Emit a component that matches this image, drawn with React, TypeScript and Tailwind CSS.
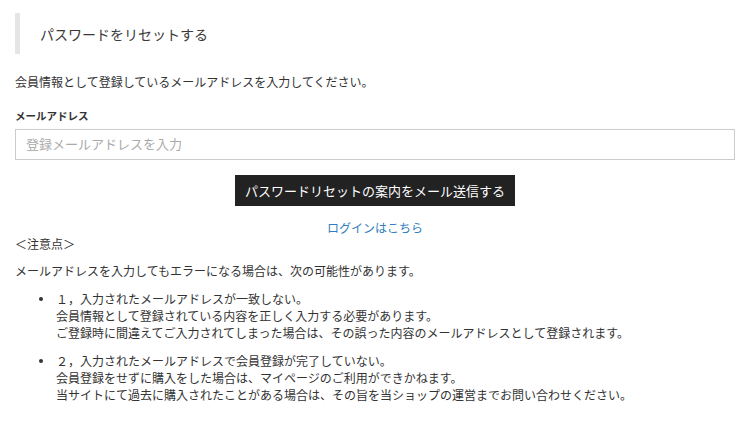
import React from "react";

export default function App() {
  const font = {
    fontFamily: '"Noto Sans CJK JP", "Noto Sans", sans-serif',
  };
  return (
    <div
      className="w-[748px] h-[426px] bg-white text-[#333] pt-[13px] px-[15px] font-['Noto_Sans_CJK_JP',sans-serif]"
      style={font}
    >
      <div className="w-[720px]">
        <h2 className="border-l-[5px] border-[#e5e5e5] h-[41px] flex items-center pl-[20px] text-[14px] font-normal text-[#3a3a3a] leading-none">
          パスワードをリセットする
        </h2>
        <p className="mt-[19px] text-[12px] leading-[18px]">
          会員情報として登録しているメールアドレスを入力してください。
        </p>
        <div className="mt-[17px] text-[10.5px] font-bold leading-[16px]">
          メールアドレス
        </div>
        <input
          type="text"
          placeholder="登録メールアドレスを入力"
          className="mt-[5px] block w-[720px] h-[31px] border border-[#cccccc] pl-[10px] pr-[10px] pb-[3px] text-[13px] placeholder:text-[#aaaaaa] outline-none"
        />
        <div className="mt-[15px] flex justify-center">
          <button className="h-[31px] px-[10px] bg-[#222222] text-white text-[13px] leading-none">
            パスワードリセットの案内をメール送信する
          </button>
        </div>
        <div className="mt-[14px] text-center text-[12px] leading-[16px]">
          <a className="text-[#2f7ec0]" href="#">
            ログインはこちら
          </a>
        </div>
        <div className="text-[12px] leading-[16px]">＜注意点＞</div>
        <p className="mt-[10px] text-[12px] leading-[18px]">
          メールアドレスを入力してもエラーになる場合は、次の可能性があります。
        </p>
        <ul className="mt-[10px] pl-[24px] text-[12px] leading-[17px] flex flex-col gap-[11px]">
          <li className="flex">
            <span className="w-[17px] shrink-0 pt-[7px]">
              <span className="block w-[4px] h-[4px] rounded-full bg-[#333]" />
            </span>
            <div>
              <div>１，入力されたメールアドレスが一致しない。</div>
              <div>会員情報として登録されている内容を正しく入力する必要があります。</div>
              <div>ご登録時に間違えてご入力されてしまった場合は、その誤った内容のメールアドレスとして登録されます。</div>
            </div>
          </li>
          <li className="flex">
            <span className="w-[17px] shrink-0 pt-[7px]">
              <span className="block w-[4px] h-[4px] rounded-full bg-[#333]" />
            </span>
            <div>
              <div>２，入力されたメールアドレスで会員登録が完了していない。</div>
              <div>会員登録をせずに購入をした場合は、マイページのご利用ができかねます。</div>
              <div>当サイトにて過去に購入されたことがある場合は、その旨を当ショップの運営までお問い合わせください。</div>
            </div>
          </li>
        </ul>
      </div>
    </div>
  );
}
